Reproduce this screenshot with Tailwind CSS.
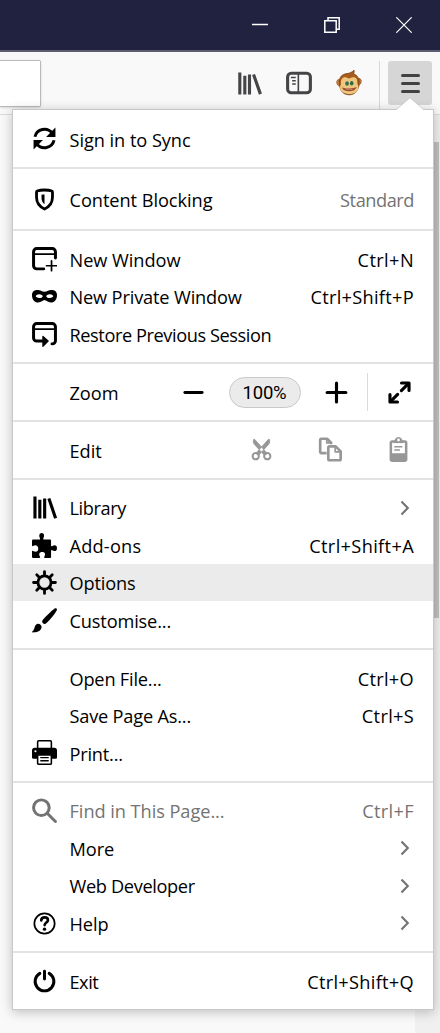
<!DOCTYPE html>
<html lang="en">
<head>
    <meta charset="UTF-8">
    <meta name="viewport" content="width=device-width, initial-scale=1.0">
    <title>Browser Menu</title>
    <script src="https://cdn.jsdelivr.net/npm/@tailwindcss/browser@4"></script>
</head>
<body class="bg-[#f9f9fa] overflow-hidden">
    <div class="relative w-[440px] h-[1033px] overflow-hidden flex flex-col font-['Open_Sans','Noto_Sans',sans-serif] text-[18.2px] tracking-[-0.05px] text-black">

        <!-- Title bar -->
        <header class="h-[52px] shrink-0 bg-[#20223f] border-b-2 border-[#5c5d70] flex items-center justify-end gap-14 pr-7 text-white">
            <svg class="size-4" viewBox="0 0 16 16" fill="none" stroke="currentColor" stroke-width="1.5"><path d="M0 7.5h16"/></svg>
            <svg class="size-4" viewBox="0 0 16 16" fill="none" stroke="currentColor" stroke-width="1.5"><path d="M.8 3.8h11.4v11.4H.8zM4 3.5V.8h11.2v11.4h-3"/></svg>
            <svg class="size-4" viewBox="0 0 16 16" fill="none" stroke="currentColor" stroke-width="1.2"><path d="M.3.3l15.4 15.4M15.7.3L.3 15.7"/></svg>
        </header>

        <!-- Toolbar -->
        <div class="h-[63px] shrink-0 border-b border-[#dcdcdc] flex items-center text-[#454547]">
            <div class="w-[41px] h-[47px] bg-white border border-l-0 border-[#b9b9b9] rounded-r-[2px] shadow-sm"></div>
            <svg class="ml-[196px] w-[25px] h-[25px]" viewBox="0 0 16 16" fill="none" stroke="currentColor" stroke-width="2"><path d="M1.8 1v14M5 3v12M8 2.2V15M10.6 2.3l4.400 12.500"/></svg>
            <svg class="ml-[24px] w-[26px] h-[26px]" viewBox="0 0 16 16" fill="none" stroke="currentColor"><rect x="1" y="2" width="14" height="12" rx="2.2" stroke-width="1.9"/><path d="M7.6 2v12" stroke-width="1"/><path d="M3 4.6h3M3.8 6.6H6M3.8 8.6H6" stroke-width=".9"/></svg>
            <svg class="ml-[24px] size-[26px]" viewBox="0 0 26 26">
                <path d="M3 9.5C1.400 9.700.6 11 .8 12.600c.2 1.900 1.200 3.300 3 3.300zM23 8.500c1.600.2 2.400 1.500 2.200 3.100-.2 1.900-1.200 3.500-3 3.500z" fill="#c98843" stroke="#8a4b18" stroke-width=".8"/>
                <path d="M3.500 10C4 6 7.500 4 11 3.600c2.700-.3 5-1.300 7-3.400.4 1.500.1 2.500-.5 3.500 3.500 1.300 5.700 4.300 5.700 8.300 0 7-3.200 12.800-10 12.800S2.700 19.500 3.500 10z" fill="#a85c1c" stroke="#7b3d10" stroke-width=".8"/>
                <path d="M5 13c-.5-4 2-6.300 4.500-5.800 1.500.3 2.500 1 3.700 1.400 1.200-.4 2.300-1.200 3.800-1.400 3.200-.4 4.600 2.500 4.300 5.800-.1 1.200 1.200 2 1.200 4.500 0 4-4 6.500-9 6.500s-9.500-2.300-9.500-6.500c0-2.300 1.200-3 1-4.500z" fill="#efc67e"/>
                <ellipse cx="10.5" cy="13.3" rx="2" ry="2.6" fill="#f5dc9f"/><ellipse cx="16" cy="13" rx="2" ry="2.6" fill="#f5dc9f"/>
                <ellipse cx="11" cy="13.5" rx="1.800" ry="2.300" fill="#2f6b43"/><ellipse cx="15.700" cy="13.200" rx="1.800" ry="2.300" fill="#2f6b43"/>
                <path d="M7 18.300c4 1.200 8.500 1.100 12.500-.3-1.200 2.100-3.300 2.600-6 2.600-3.300 0-5.500-.4-6.500-2.300z" fill="#f8e6cf" stroke="#9c4a30" stroke-width="1.100"/>
            </svg>
            <div class="ml-[17px] w-px h-[53px] self-end bg-[#d7d7d8]"></div>
            <div class="ml-[8px] w-[44px] h-[44px] rounded-[3px] bg-[#d6d6d6] flex flex-col items-center justify-center gap-[5px]">
                <span class="w-[19px] h-[3px] rounded-full bg-[#424244]"></span>
                <span class="w-[19px] h-[3px] rounded-full bg-[#424244]"></span>
                <span class="w-[19px] h-[3px] rounded-full bg-[#424244]"></span>
            </div>
        </div>

        <!-- Page and scrollbar -->
        <div class="flex-1 flex justify-end">
            <div class="w-[25px] bg-[#f0f0f0] pt-[27px] pr-[1px]">
                <div class="h-[476px] bg-[#c1c1c1]"></div>
            </div>
        </div>

        <!-- Menu panel -->
        <div class="absolute left-[12px] top-[109px] w-[422px] h-[901px] bg-white border border-[#c8c8c9] shadow-[0_2px_11px_rgba(0,0,0,0.24)] flex flex-col">
            <svg class="absolute left-[382px] -top-[13px] w-[30px] h-[14px]" viewBox="0 0 30 14"><path d="M0 14L15 .8 30 14z" fill="#fff"/><path d="M0 12.5h1.500L15 .8l13.500 11.700H30" fill="none" stroke="#c8c8c9" stroke-width=".8"/></svg>

            <section class="h-[59px] border-b-2 border-[#e2e2e2] flex flex-col justify-center">
                <div class="h-[37.5px] flex items-center pl-[18.5px] pr-[19px]">
                    <svg class="size-[25px] mr-[13px]" viewBox="0 0 16 16" fill="none" stroke="currentColor" stroke-width="1.9"><path d="M1.900 6.900A6.200 6.200 0 0 1 12.900 4.600M14.100 9.100A6.200 6.200 0 0 1 3.100 11.400"/><path d="M15 1v6H9zM1 15V9h6z" fill="currentColor" stroke="none"/></svg>
                    <span class="flex-1 pt-[4px]">Sign in to Sync</span>
                </div>
            </section>

            <section class="h-[62px] border-b-2 border-[#e2e2e2] flex flex-col justify-center">
                <div class="h-[37.5px] flex items-center pl-[18.5px] pr-[19px]">
                    <svg class="size-[25px] mr-[13px]" viewBox="0 0 16 16" fill="none" stroke="currentColor"><path d="M8 1.900c2 0 3.700.3 4.700.7.300.1.400.3.400.6v3.400c0 3.700-1.800 6-5.100 7.500-3.300-1.500-5.100-3.800-5.100-7.500V3.200c0-.3.100-.5.400-.6C4.300 2.200 6 1.900 8 1.900z" stroke-width="1.8"/><path d="M8 4.800v6.300C6.700 10.100 6.100 8.800 6.100 6.900V5C6.700 4.900 7.300 4.800 8 4.800z" fill="currentColor" stroke="none"/></svg>
                    <span class="flex-1 pt-[3px]">Content Blocking</span>
                    <span class="pt-[3px] tracking-[-0.45px] text-[#737373]">Standard</span>
                </div>
            </section>

            <section class="h-[133px] border-b-2 border-[#e2e2e2] flex flex-col justify-center">
                <div class="h-[37.5px] flex items-center pl-[18.5px] pr-[19px]">
                    <svg class="size-[25px] mr-[13px]" viewBox="0 0 16 16" fill="none" stroke="currentColor" stroke-linecap="round"><path d="M15 7V3a2 2 0 0 0-2-2H3a2 2 0 0 0-2 2v9a2 2 0 0 0 2 2h4.500" stroke-width="1.9"/><path d="M1 4.500h14M12.500 8.800v6.400M9.300 12h6.400" stroke-width="1.100"/></svg>
                    <span class="flex-1 pt-[3px]">New Window</span>
                    <span class="pt-[3px] tracking-[0.4px]">Ctrl+N</span>
                </div>
                <div class="h-[37.5px] flex items-center pl-[18.5px] pr-[19px]">
                    <svg class="size-[25px] mr-[13px]" viewBox="0 0 16 16" fill="currentColor" fill-rule="evenodd"><path d="M3.600 3.800C5.300 3.800 6.300 4.900 8 4.900s2.700-1.100 4.400-1.100c1.800 0 3.600.8 3.600 3.200 0 3-1.700 4.900-3.900 4.900-2 0-3-1.600-4.100-1.600s-2.100 1.600-4.100 1.600C1.700 11.900 0 10 0 7c0-2.400 1.800-3.200 3.600-3.200zM4.600 6.500C3.200 6.500 2.400 7.500 2.400 7.900S3.400 9 4.700 9s2.200-.7 2.200-1.200-.9-1.300-2.300-1.300zm6.800 0c-1.400 0-2.300.8-2.300 1.300S10 9 11.300 9s2.300-.7 2.300-1.100-.8-1.400-2.200-1.400z"/></svg>
                    <span class="flex-1 pt-[3px] tracking-[-0.15px]">New Private Window</span>
                    <span class="pt-[3px] tracking-[0.3px]">Ctrl+Shift+P</span>
                </div>
                <div class="h-[37.5px] flex items-center pl-[18.5px] pr-[19px]">
                    <svg class="size-[25px] mr-[13px]" viewBox="0 0 16 16" fill="none" stroke="currentColor" stroke-linecap="round"><path d="M12.800 14H13a2 2 0 0 0 2-2V3a2 2 0 0 0-2-2H3a2 2 0 0 0-2 2v7.200a2 2 0 0 0 2 2h5" stroke-width="1.9"/><path d="M1 4.500h14" stroke-width="1.100"/><path d="M7 9.200l3.300 3L7 15.500z" fill="currentColor" stroke-width=".8" stroke-linejoin="round"/></svg>
                    <span class="flex-1 pt-[3px] tracking-[-0.42px]">Restore Previous Session</span>
                </div>
            </section>

            <section class="h-[58px] border-b-2 border-[#e2e2e2] flex items-center pl-[56.5px] pr-[20px]">
                <span class="w-[111px] pt-[3px]">Zoom</span>
                <svg class="size-[25px]" viewBox="0 0 16 16" stroke="currentColor" stroke-width="1.9" stroke-linecap="round"><path d="M2.500 8h11"/></svg>
                <div class="ml-[23px] w-[72px] h-[31px] rounded-full bg-[#ebebeb] border border-[#c9c9c9] flex items-center justify-center pt-[3px] font-[Roboto,sans-serif] text-[18.5px] tracking-[-0.2px]">100%</div>
                <svg class="ml-[23px] size-[25px]" viewBox="0 0 16 16" stroke="currentColor" stroke-width="2" stroke-linecap="round"><path d="M2 8h12M8 2v12"/></svg>
                <div class="ml-[18px] w-px h-[38px] bg-[#d9d9d9]"></div>
                <svg class="ml-[19px] size-[25px]" viewBox="0 0 16 16" fill="none" stroke="currentColor" stroke-width="2" stroke-linecap="round" stroke-linejoin="round"><path d="M9.200 6.800L13.500 2.500M6.800 9.200L2.500 13.500"/><path d="M9.300 1.900h4.800v4.800M1.900 9.300v4.800h4.800"/></svg>
            </section>

            <section class="h-[57.5px] border-b-2 border-[#e2e2e2] flex items-center pl-[56.5px] pr-[22px] text-[#979797]">
                <span class="flex-1 pt-[3px] text-black">Edit</span>
                <svg class="size-[25px]" viewBox="0 0 16 16" fill="none" stroke="currentColor"><path d="M3 1.500c-.6 1.400-.2 2.500.6 3.400L9.800 11.600l1.900-1L3.600 1.500zM13 1.500c.6 1.400.2 2.500-.6 3.400L6.200 11.600l-1.900-1 8.100-9.100z" fill="currentColor" stroke-width=".5"/><circle cx="4.300" cy="12.300" r="2" stroke-width="1.300"/><circle cx="11.700" cy="12.300" r="2" stroke-width="1.300"/></svg>
                <svg class="ml-[44px] size-[25px]" viewBox="0 0 16 16" fill="none" stroke="currentColor" stroke-width="1.700" stroke-linejoin="round"><path d="M5.500 10.300H2.200a.8.8 0 0 1-.8-.8V1.900a.8.8 0 0 1 .8-.8h3.600l2.600 2.600v1"/><path d="M5.600 1.300v2.500h2.600" stroke-width="1.100"/><path d="M7.400 6h3.900l3.200 3.200v4.900a.8.8 0 0 1-.8.8H7.400a.8.8 0 0 1-.8-.8V6.800a.8.8 0 0 1 .8-.8z"/><path d="M11 6.300v3.200h3.200" stroke-width="1.100"/></svg>
                <svg class="ml-[43px] size-[25px]" viewBox="0 0 16 16" fill="currentColor"><path d="M4 2h1.500C6 .8 7 0 8 0s2 .8 2.500 2H12a1.700 1.700 0 0 1 1.700 1.700v10.600A1.700 1.700 0 0 1 12 16H4a1.700 1.700 0 0 1-1.700-1.700V3.700A1.700 1.700 0 0 1 4 2z"/><path d="M3.900 3.700h8.200v6.700H3.900z" fill="#fff"/><path d="M5 3.300h6" stroke="currentColor" stroke-width="1.200"/><path d="M5.300 6.200h5.200M5.300 8.300h3.600" stroke="currentColor" stroke-width="1"/><circle cx="8" cy="1.900" r=".9" fill="#fff"/></svg>
            </section>

            <section class="h-[170.5px] border-b-2 border-[#e2e2e2] flex flex-col justify-center">
                <div class="h-[37.5px] flex items-center pl-[18.5px] pr-[19px]">
                    <svg class="size-[25px] mr-[13px]" viewBox="0 0 16 16" fill="none" stroke="currentColor" stroke-width="2"><path d="M1.900 1v14M5 3v12M8.100 2.200V15M10.800 2.300l4.300 12.500"/></svg>
                    <span class="flex-1 pt-[3px] tracking-[-0.4px]">Library</span>
                    <svg class="size-[16px] text-[#737373]" viewBox="0 0 16 16" fill="none" stroke="currentColor" stroke-width="2.100"><path d="M3.500 1.500L9.800 8l-6.300 6.500"/></svg>
                </div>
                <div class="h-[37.5px] flex items-center pl-[18.5px] pr-[19px]">
                    <svg class="size-[25px] mr-[13px]" viewBox="0 0 16 16" fill="currentColor"><path d="M1 4.200h3.700c.5 0 .6-.4.400-.8C4.300 1.800 4.600 0 6.200 0s1.900 1.800 1.100 3.400c-.2.400-.1.800.4.800h3.700c.5 0 .8.300.8.800v3c0 .5.300.7.700.4 1.600-1 3.100-.5 3.100 1.300s-1.500 2.400-3.100 1.400c-.4-.3-.7-.1-.7.400v3.700c0 .5-.3.800-.8.800H8.300c-.5 0-.7-.4-.4-.9.900-1.600.5-3-1.400-3s-2.300 1.400-1.400 3c.3.500.1.900-.4.900H.9c-.5 0-.9-.3-.9-.8v-3.300c0-.5.300-.7.700-.4 1.700 1 3.300.5 3.300-1.400S2.400 7.300.7 8.300C.3 8.600 0 8.400 0 7.900V5c0-.5.400-.8 1-.8z"/></svg>
                    <span class="flex-1 pt-[3px] tracking-[0.2px]">Add-ons</span>
                    <span class="pt-[3px] tracking-[0.35px]">Ctrl+Shift+A</span>
                </div>
                <div class="h-[37.5px] flex items-center pl-[18.5px] pr-[19px] bg-[#ebebeb]">
                    <svg class="size-[25px] mr-[13px]" viewBox="0 0 16 16" fill="none" stroke="currentColor" stroke-width="1.8" stroke-linecap="round"><circle cx="8" cy="8" r="4.200"/><path d="M8 1v2M8 13v2M1 8h2M13 8h2M3.050 3.050l1.400 1.400M11.550 11.550l1.400 1.400M3.050 12.950l1.400-1.400M11.550 4.450l1.400-1.400"/></svg>
                    <span class="flex-1 pt-[3px] tracking-[-0.15px]">Options</span>
                </div>
                <div class="h-[37.5px] flex items-center pl-[18.5px] pr-[19px]">
                    <svg class="size-[25px] mr-[13px]" viewBox="0 0 16 16" fill="currentColor"><path d="M14.300.5c.9-.8 2.100 0 1.500 1.100-1.400 2.500-4.200 5.900-6.500 8-.8.8-1.600.8-2.300.1s-.7-1.500.1-2.300C9 5.300 12 2.200 14.300.5zM3.300 10.200c1.500-.5 3.300 1 2.700 2.700C5.300 14.900 3 15.500.3 15.600c-.4 0-.4-.4-.1-.6 1.700-1.200 1.200-4.100 3.100-4.800z"/></svg>
                    <span class="flex-1 pt-[3px] tracking-[-0.15px]">Customise...</span>
                </div>
            </section>

            <section class="h-[132.5px] border-b-2 border-[#e2e2e2] flex flex-col justify-center">
                <div class="h-[37.5px] flex items-center pl-[56.5px] pr-[19px]">
                    <span class="flex-1 pt-[3px] tracking-[-0.2px]">Open File...</span>
                    <span class="pt-[3px] tracking-[0.3px]">Ctrl+O</span>
                </div>
                <div class="h-[37.5px] flex items-center pl-[56.5px] pr-[19px]">
                    <span class="flex-1 pt-[3px] tracking-[-0.2px]">Save Page As...</span>
                    <span class="pt-[3px] tracking-[0.3px]">Ctrl+S</span>
                </div>
                <div class="h-[37.5px] flex items-center pl-[18.5px] pr-[19px]">
                    <svg class="size-[25px] mr-[13px]" viewBox="0 0 16 16"><path d="M1.600 5h12.800C15.300 5 16 5.700 16 6.600V11a1 1 0 0 1-1 1H1a1 1 0 0 1-1-1V6.600C0 5.700.7 5 1.600 5z" fill="currentColor"/><path d="M3.600 5.500V1.200c0-.4.300-.7.700-.7h7.400c.4 0 .7.300.7.700v4.300zM3.600 9.500h8.800v5.300c0 .4-.3.700-.7.700H4.300c-.4 0-.7-.3-.7-.7z" fill="#fff" stroke="currentColor" stroke-width="1"/><path d="M5.300 11.300h5.400M5.300 13.300h5.400" stroke="currentColor" stroke-width=".9"/><circle cx="2.200" cy="7.200" r=".7" fill="#fff"/></svg>
                    <span class="flex-1 pt-[3px] tracking-[-0.2px]">Print...</span>
                </div>
            </section>

            <section class="h-[170.5px] border-b-2 border-[#e2e2e2] flex flex-col justify-center">
                <div class="h-[37.5px] flex items-center pl-[18.5px] pr-[19px] text-[#737373]">
                    <svg class="size-[25px] mr-[13px]" viewBox="0 0 16 16" fill="none" stroke="currentColor" stroke-width="1.9" stroke-linecap="round"><circle cx="6" cy="6.200" r="5"/><path d="M9.900 9.900L15 15"/></svg>
                    <span class="flex-1 pt-[3px]">Find in This Page...</span>
                    <span class="pt-[3px] tracking-[0.35px]">Ctrl+F</span>
                </div>
                <div class="h-[37.5px] flex items-center pl-[56.5px] pr-[19px]">
                    <span class="flex-1 pt-[3px]">More</span>
                    <svg class="size-[16px] text-[#737373]" viewBox="0 0 16 16" fill="none" stroke="currentColor" stroke-width="2.100"><path d="M3.500 1.500L9.800 8l-6.300 6.500"/></svg>
                </div>
                <div class="h-[37.5px] flex items-center pl-[56.5px] pr-[19px]">
                    <span class="flex-1 pt-[3px] tracking-[-0.35px]">Web Developer</span>
                    <svg class="size-[16px] text-[#737373]" viewBox="0 0 16 16" fill="none" stroke="currentColor" stroke-width="2.100"><path d="M3.500 1.500L9.800 8l-6.300 6.500"/></svg>
                </div>
                <div class="h-[37.5px] flex items-center pl-[18.5px] pr-[19px]">
                    <svg class="size-[25px] mr-[13px]" viewBox="0 0 16 16" fill="none" stroke="currentColor" stroke-linecap="round"><circle cx="8" cy="8" r="6.500" stroke-width="1.100"/><path d="M5.900 6c.1-1.200 1-1.900 2.200-1.900s2.100.7 2.100 1.800c0 1.400-2.100 1.500-2.100 3.100" stroke-width="1.700"/><circle cx="8" cy="11.600" r="1.100" fill="currentColor" stroke="none"/></svg>
                    <span class="flex-1 pt-[3px]">Help</span>
                    <svg class="size-[16px] text-[#737373]" viewBox="0 0 16 16" fill="none" stroke="currentColor" stroke-width="2.100"><path d="M3.500 1.500L9.800 8l-6.300 6.500"/></svg>
                </div>
            </section>

            <section class="flex-1 flex flex-col justify-center">
                <div class="h-[37.5px] flex items-center pl-[18.5px] pr-[19px]">
                    <svg class="size-[25px] mr-[13px]" viewBox="0 0 16 16" fill="none" stroke="currentColor" stroke-width="1.9" stroke-linecap="round"><path d="M8 1.400v5M5 2.800a6 6 0 1 0 6 0"/></svg>
                    <span class="flex-1 pt-[3px] tracking-[-0.5px]">Exit</span>
                    <span class="pt-[3px] tracking-[0.3px]">Ctrl+Shift+Q</span>
                </div>
            </section>
        </div>
    </div>
</body>
</html>
